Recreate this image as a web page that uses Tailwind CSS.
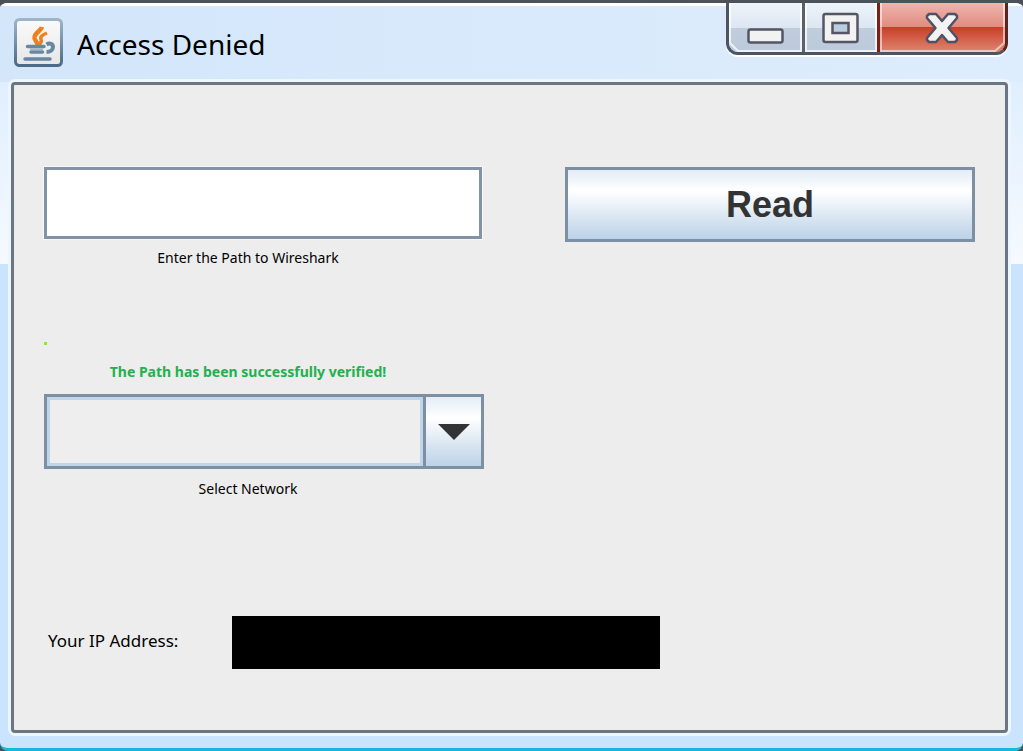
<!DOCTYPE html>
<html lang="en">
<head>
<meta charset="utf-8">
<meta name="viewport" content="width=device-width, initial-scale=1">
<title>Access Denied</title>
<script src="https://cdn.jsdelivr.net/npm/@tailwindcss/browser@4"></script>
</head>
<body class="bg-[#4a4f55] font-['Noto_Sans',sans-serif] text-black">
<div class="relative flex min-h-screen flex-col overflow-hidden rounded-b-lg rounded-t-lg border-t-3 border-b-3 border-t-[#4b5259] border-b-[#16b8dc] bg-linear-to-b from-[#d6e9fd] from-0% via-[#f6faff] via-35% to-[#cbe4fd] to-35% pr-[15px] pb-[15px] pl-[11px]">
  <header class="-mr-[15px] -ml-[11px] flex h-[79px] items-start justify-between border-t-3 border-white bg-linear-to-r from-[#d3e6fa] to-[#deedfd] pr-[15px] pl-[14px]">
    <div class="flex items-center gap-[14px] pt-3">
      <svg class="size-[49px]" viewBox="0 0 49 49" aria-hidden="true">
        <defs>
          <linearGradient id="tile" x1="0" y1="0" x2="0" y2="1"><stop offset="0" stop-color="#fbfbfb"/><stop offset="1" stop-color="#e6e6e6"/></linearGradient>
          <linearGradient id="rim" x1="0" y1="0" x2="0" y2="1"><stop offset="0" stop-color="#9eb5c9"/><stop offset="1" stop-color="#4c6b86"/></linearGradient>
        </defs>
        <rect x="1.5" y="1.5" width="46" height="46" rx="4" fill="url(#tile)" stroke="url(#rim)" stroke-width="3"/>
        <path d="M28 9C27 13 20 15 20.500 20C21 23 23 24 24 27" fill="none" stroke="#ee801d" stroke-width="4.500"/>
        <path d="M33 15C28 17 26 19 27 21C28 24 26 26 24 27" fill="none" stroke="#ee801d" stroke-width="3.500"/>
        <path d="M13.500 28.500H30M17 34H28.500M11 41H36" fill="none" stroke="#6788a5" stroke-width="3.500" stroke-linecap="round"/>
        <path d="M32.500 26.500C36 24.500 39 26 39 29C39 32 36 34 32.500 34" fill="none" stroke="#6788a5" stroke-width="4"/>
        <path d="M16 31.200H29" stroke="#a3b8c9" stroke-width="2"/>
      </svg>
      <h1 class="pt-[2px] text-[28px] leading-9">Access Denied</h1>
    </div>
    <div class="-mt-[3px] flex h-[52px] overflow-hidden rounded-b-xl border-x-3 border-b-3 border-[#4d5563] border-r-[#5a2622] shadow-[0_2px_0_white]">
      <button aria-label="Minimize" class="w-[73px] bg-linear-to-b from-[#edf3fa] via-[#dde7f2] via-50% to-[#ccd9ea] to-100%">
        <svg class="h-full w-full" viewBox="0 0 73 49" preserveAspectRatio="none" aria-hidden="true">
          <rect y="25" width="73" height="24" fill="#b5c4d6" opacity=".75"/>
          <path d="M1 -2V40L9 48H72V-2" fill="none" stroke="#fff" stroke-opacity=".75" stroke-width="2"/>
          <rect x="19.500" y="26.500" width="34" height="13" rx="2" fill="#f2f2f2" stroke="#555566" stroke-width="2.500"/>
        </svg>
      </button>
      <button aria-label="Maximize" class="w-[75px] border-l-3 border-[#59616f] bg-linear-to-b from-[#edf3fa] via-[#dde7f2] via-50% to-[#ccd9ea] to-100%">
        <svg class="h-full w-full" viewBox="0 0 72 49" preserveAspectRatio="none" aria-hidden="true">
          <rect y="25" width="72" height="24" fill="#b5c4d6" opacity=".75"/>
          <rect x="1" y="-2" width="70" height="50" fill="none" stroke="#fff" stroke-opacity=".75" stroke-width="2"/>
          <rect x="18.500" y="11" width="34" height="28" rx="2" fill="#f2f2f2" stroke="#555566" stroke-width="2.500"/>
          <rect x="27.500" y="20" width="16" height="10" fill="#b9cddd" stroke="#555566" stroke-width="2.500"/>
        </svg>
      </button>
      <button aria-label="Close" class="w-[128px] border-l-3 border-[#7c2017] bg-linear-to-b from-[#efb5ae] from-0% via-[#e08c80] via-49% to-[#c8402a] to-49%">
        <svg class="h-full w-full" viewBox="0 0 125 49" preserveAspectRatio="none" aria-hidden="true">
          <defs><linearGradient id="glow" x1="0" y1="0" x2="0" y2="1"><stop offset="0" stop-color="#c93d26"/><stop offset="1" stop-color="#de8772"/></linearGradient></defs>
          <rect y="24" width="125" height="25" fill="url(#glow)"/>
          <path d="M1 -2V48H115L124 40V-2" fill="none" stroke="#fff" stroke-opacity=".55" stroke-width="2"/>
          <path d="M49 11H56L62 18L68 11H75L77 13V15L68.500 25L77 35V37L75 39H68L62 32L56 39H49L47 37V35L55.500 25L47 15V13Z" fill="#f3f3f3" stroke="#4f5263" stroke-width="2.500" stroke-linejoin="round"/>
        </svg>
      </button>
    </div>
  </header>

  <main class="relative flex-1 rounded-sm border-3 border-[#6a7682] bg-[#ededed] px-[30px] shadow-[0_0_0_3px_#edf6ff]">
    <form class="pt-[82px]" onsubmit="return false">
      <div class="grid grid-cols-[440fr_410fr] items-start gap-x-[81px]">
        <div>
          <div class="pr-[2px]">
            <input id="path" type="text" class="block h-[72px] w-full border-3 border-[#8193a5] bg-white px-3 text-2xl outline-1 outline-white/60">
          </div>
          <label for="path" class="mt-[9px] block pr-8 text-center text-[14px] leading-5">Enter the Path to Wireshark</label>
        </div>
        <button class="h-[75px] border-3 border-[#7d90a3] bg-linear-to-b from-[#e3ecf6] from-0% via-white via-30% to-[#bcd2e7] to-100% font-['Liberation_Sans',sans-serif] text-[36px] leading-none font-bold text-[#333]">Read</button>
      </div>
      <div class="grid grid-cols-[440fr_410fr] gap-x-[81px] pt-[74px]">
        <div>
          <span class="block size-[3px] bg-[#84f01c]"></span>
          <p role="status" class="mt-[17px] pr-8 text-center text-[14px] leading-5 font-bold text-[#22b14c]">The Path has been successfully verified!</p>
          <div class="relative mt-3">
            <select id="network" class="block h-[75px] w-full appearance-none border-3 border-[#7d90a3] bg-[#eee] pr-16 pl-4 text-2xl inset-shadow-[0_0_0_3px_#bfd5ea]"></select>
            <span class="pointer-events-none absolute inset-y-[3px] right-[3px] flex w-[58px] items-center justify-center border-l-3 border-[#7d90a3] bg-linear-to-b from-[#e3ecf6] from-0% via-white via-30% to-[#bcd2e7] to-100% shadow-[-3px_0_0_#bfd5ea]">
              <svg class="h-4 w-8" viewBox="0 0 32 16" aria-hidden="true"><path d="M0 0H32L16 16Z" fill="#333"/></svg>
            </span>
          </div>
          <label for="network" class="mt-[10px] block pr-8 text-center text-[14px] leading-5">Select Network</label>
        </div>
      </div>
      <div class="flex items-center pt-[117px] pl-1">
        <label for="ip" class="w-[184px] pb-1 text-[17px] leading-6">Your IP Address:</label>
        <output id="ip" class="block h-[53px] w-[428px] bg-black"></output>
      </div>
    </form>
  </main>
</div>
</body>
</html>
